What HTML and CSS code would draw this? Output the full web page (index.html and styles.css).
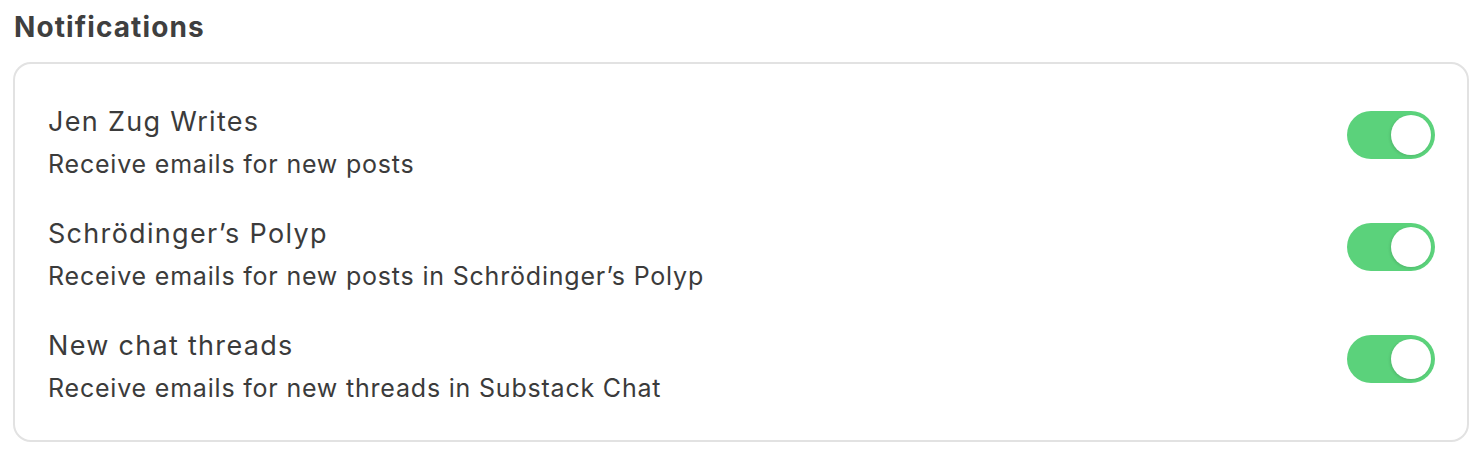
FILE: index.html
```html
<!DOCTYPE html>
<html>
<head>
<meta charset="utf-8">
<link rel="stylesheet" href="styles.css">
</head>
<body>
<section class="settings">
  <h2 class="heading">Notifications</h2>
  <div class="card">
    <div class="row">
      <div class="text">
        <div class="title">Jen Zug Writes</div>
        <div class="desc">Receive emails for new posts</div>
      </div>
      <div class="toggle on"><span class="knob"></span></div>
    </div>
    <div class="row">
      <div class="text">
        <div class="title">Schrödinger’s Polyp</div>
        <div class="desc">Receive emails for new posts in Schrödinger’s Polyp</div>
      </div>
      <div class="toggle on"><span class="knob"></span></div>
    </div>
    <div class="row">
      <div class="text">
        <div class="title">New chat threads</div>
        <div class="desc">Receive emails for new threads in Substack Chat</div>
      </div>
      <div class="toggle on"><span class="knob"></span></div>
    </div>
  </div>
</section>
</body>
</html>
```

FILE: styles.css
```css
html, body {
  margin: 0;
  padding: 0;
  background: #ffffff;
}
body {
  font-family: Inter, "Noto Sans", sans-serif;
  color: #3b3b3b;
}
.settings {
  padding: 10px 15px 0 13px;
}
.heading {
  margin: 0 0 0 1px;
  font-size: 28px;
  font-weight: 700;
  line-height: 34px;
  color: #3f3f3f;
  letter-spacing: 1.1px;
}
.card {
  margin-top: 18px;
  border: 2px solid #e2e2e2;
  border-radius: 18px;
  padding: 40px 32px 36px 33px;
  display: flex;
  flex-direction: column;
  gap: 36px;
}
.row {
  display: flex;
  align-items: flex-start;
  justify-content: space-between;
}
.text {
  display: flex;
  flex-direction: column;
  gap: 8px;
}
.title {
  font-size: 27px;
  line-height: 36px;
  letter-spacing: 1.3px;
  color: #3b3b3b;
}
.desc {
  font-size: 25px;
  line-height: 32px;
  letter-spacing: 0.8px;
  color: #3b3b3b;
}
.toggle {
  margin-top: 7px;
  width: 88px;
  height: 48px;
  border-radius: 24px;
  background: #5bd27b;
  display: flex;
  align-items: center;
  justify-content: flex-end;
  padding: 0 4px;
  box-sizing: border-box;
}
.knob {
  width: 40px;
  height: 40px;
  border-radius: 50%;
  background: #fff;
  box-shadow: -1px 1px 3px rgba(0,0,0,0.12);
}
```
